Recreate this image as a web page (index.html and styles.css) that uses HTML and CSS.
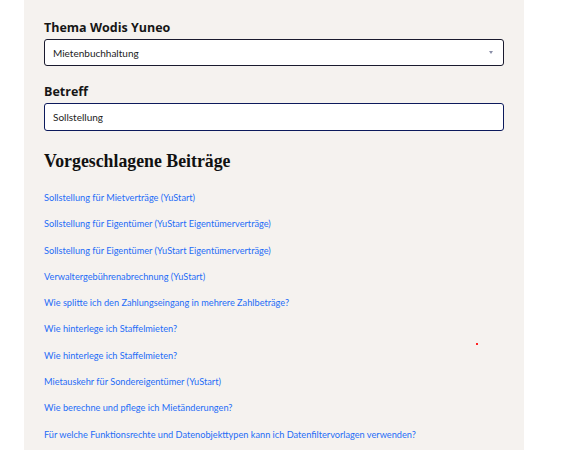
FILE: index.html
```html
<!DOCTYPE html>
<html lang="de">
<head>
  <meta charset="UTF-8">
  <title>Kontakt</title>
  <link rel="stylesheet" href="styles.css">
</head>
<body>
  <div class="panel">
    <a class="cut" href="#">Produkt</a>

    <div class="field">
      <label class="label">Thema Wodis Yuneo</label>
      <div class="select">
        <span>Mietenbuchhaltung</span>
        <span class="arrow"></span>
      </div>
    </div>

    <div class="field">
      <label class="label">Betreff</label>
      <div class="input">Sollstellung</div>
    </div>

    <h2 class="title">Vorgeschlagene Beiträge</h2>
    <ul class="links">
      <li><a href="#">Sollstellung für Mietverträge (YuStart)</a></li>
      <li><a href="#">Sollstellung für Eigentümer (YuStart Eigentümerverträge)</a></li>
      <li><a href="#">Sollstellung für Eigentümer (YuStart Eigentümerverträge)</a></li>
      <li><a href="#">Verwaltergebührenabrechnung (YuStart)</a></li>
      <li><a href="#">Wie splitte ich den Zahlungseingang in mehrere Zahlbeträge?</a></li>
      <li><a href="#">Wie hinterlege ich Staffelmieten?</a></li>
      <li><a href="#">Wie hinterlege ich Staffelmieten?</a></li>
      <li><a href="#">Mietauskehr für Sondereigentümer (YuStart)</a></li>
      <li><a href="#">Wie berechne und pflege ich Mietänderungen?</a></li>
      <li><a href="#">Für welche Funktionsrechte und Datenobjekttypen kann ich Datenfiltervorlagen verwenden?</a></li>
    </ul>
    <span class="dot"></span>
  </div>
</body>
</html>
```

FILE: styles.css
```css
*{
  margin: 0;
  padding: 0;
  box-sizing: border-box;
}
body{
  background: #fff;
  font-family: "Open Sans", "Noto Sans", sans-serif;
  color: #111;
}
.panel{
  position: relative;
  width: 500px;
  margin-left: 24px;
  margin-top: -8px;
  padding: 0 20px 4px;
  background: #f5f2ef;
}
.cut{
  display: block;
  font-family: Lato, sans-serif;
  font-size: 9.2px;
  line-height: 10px;
  color: #2a6df4;
  text-decoration: none;
}
.field{
  margin-top: 18px;
}
.field + .field{
  margin-top: 18px;
}
.label{
  display: block;
  font-size: 12.5px;
  font-weight: 700;
  line-height: 16px;
  margin-bottom: 3px;
  color: #161616;
}
.select,
.input{
  display: flex;
  align-items: center;
  justify-content: space-between;
  height: 28px;
  padding: 0 8px;
  background: #fff;
  border: 1px solid #1a1a2e;
  border-radius: 3px;
  font-family: Lato, sans-serif;
  font-size: 10px;
  color: #222;
}
.select{
  height: 27px;
}
.input{
  border-color: #0c1a5c;
}
.arrow{
  width: 0;
  height: 0;
  border-left: 2.5px solid transparent;
  border-right: 2.5px solid transparent;
  border-top: 3px solid #8a8fa8;
  margin-right: 2px;
}
.title{
  margin-top: 20px;
  font-family: "Liberation Serif", serif;
  font-size: 17.8px;
  font-weight: 700;
  color: #111;
  line-height: 20px;
}
.links{
  list-style: none;
  margin-top: 20px;
}
.links li{
  height: 26.3px;
  font-family: Lato, sans-serif;
  font-size: 9.2px;
  line-height: 14px;
}
.links a{
  color: #1f6df7;
  text-decoration: none;
}
.dot{
  position: absolute;
  left: 452px;
  top: 351px;
  width: 2px;
  height: 2px;
  background: #f22;
}
```
